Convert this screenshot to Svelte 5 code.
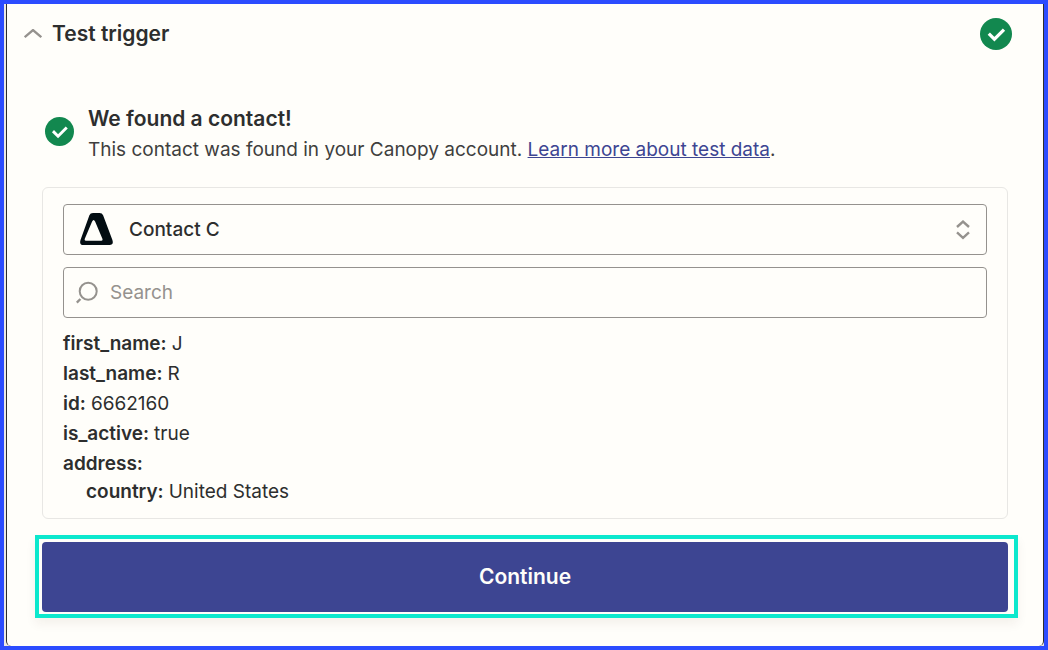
<script>
    const contacts = ['Contact C'];
    let selected = $state(contacts[0]);
    let query = $state('');
    let open = $state(true);

    const fields = [
        { key: 'first_name', value: 'J' },
        { key: 'last_name', value: 'R' },
        { key: 'id', value: '6662160' },
        { key: 'is_active', value: 'true' },
        { key: 'address', value: '' },
        { key: 'country', value: 'United States', nested: true }
    ];

    const toggle = () => {
        open = !open;
    }
</script>

{#snippet check()}
    <svg class="check" viewBox="0 0 32 32" aria-hidden="true">
        <circle cx="16" cy="16" r="16" fill="#12884f" />
        <path d="M8.8 15.6L14.4 21.2L24 11.6" fill="none" stroke="#fff" stroke-width="3.2" />
    </svg>
{/snippet}

<main class="frame">
    <section class="panel">
        <header>
            <button class="toggle" aria-expanded={open} onclick={toggle}>
                <svg width="18" height="10" viewBox="0 0 18 10" aria-hidden="true">
                    <path d="M0.7 8.2L9 1.1L17.3 8.2" fill="none" stroke="#95928e" stroke-width="2.4" />
                </svg>
                <span>Test trigger</span>
            </button>
            <div class="status">{@render check()}</div>
        </header>

        {#if open}
        <div class="message">
            <div class="icon">{@render check()}</div>
            <div>
                <h2>We found a contact!</h2>
                <p>This contact was found in your Canopy account. <a href="#test-data">Learn more about test data</a>.</p>
            </div>
        </div>

        <div class="card">
            <div class="control">
                <svg class="logo" width="33" height="33" viewBox="0 0 33 33" aria-hidden="true">
                    <path fill="#030d12" fill-rule="evenodd" d="M13 0H19.5Q22.2 0 23.1 2.2L32.4 27Q34 32 29.4 32H3.6Q-1 32 0.5 27L9.4 2.2Q10.3 0 13 0ZM12.1 8.4Q13.6 5.4 15.1 8.4L22.3 25.6Q23.1 27.8 21.2 27.8H6Q4.1 27.8 4.9 25.6Z" />
                </svg>
                <select aria-label="Test contact" bind:value={selected}>
                    {#each contacts as contact}
                        <option>{contact}</option>
                    {/each}
                </select>
                <svg class="arrows" width="14" height="20" viewBox="0 0 14 20" aria-hidden="true">
                    <path d="M1 7L7 1.6L13 7M1 12.4L7 17.8L13 12.4" fill="none" stroke="#95928e" stroke-width="2.4" />
                </svg>
            </div>

            <div class="control">
                <svg class="glass" width="23" height="23" viewBox="0 0 23 23" aria-hidden="true">
                    <g fill="none" stroke="#95928e" stroke-width="2">
                        <circle cx="12.2" cy="10.2" r="8.5" />
                        <path d="M0.8 21.6L4.4 18" stroke-width="2.4" />
                    </g>
                </svg>
                <input type="text" aria-label="Search" placeholder="Search" bind:value={query}>
            </div>

            <dl>
                {#each fields as field}
                <div class="row" class:nested={field.nested}>
                    <dt>{field.key}:</dt>
                    <dd>{field.value}</dd>
                </div>
                {/each}
            </dl>
        </div>

        <div class="highlight">
            <button class="continue">Continue</button>
        </div>
        {/if}
    </section>
</main>

<style>
:global(body) {
    background: #fffefa;
}
.frame {
    box-sizing: border-box;
    min-height: 100vh;
    display: flex;
    padding-left: 2px;
    border: 4px solid #2b4cff;
    background: #ebe9e5;
    color: #2d2e2e;
    font-family: Inter, "Liberation Sans", sans-serif;
    font-size: 19px;
    line-height: 30px;
}
.panel {
    flex: 1;
    min-width: 0;
    padding-bottom: 28px;
    border: solid #2d2e2e;
    border-width: 0 1px;
    border-radius: 0 0 5px 5px;
    background: #fffefa;
}
header {
    display: flex;
    align-items: center;
    justify-content: space-between;
    padding: 14px 31px 0 17px;
}
button {
    border: 0;
    font: inherit;
    cursor: pointer;
}
.toggle {
    display: flex;
    align-items: center;
    gap: 10px;
    padding: 0;
    background: none;
    color: inherit;
    font-size: 21px;
    font-weight: 600;
    line-height: 32px;
}
.check {
    display: block;
    width: 100%;
}
.status {
    width: 32px;
}
.message {
    display: flex;
    align-items: flex-start;
    gap: 14px;
    padding: 53px 35px 0 38px;
}
.icon {
    flex: none;
    width: 29px;
    padding-top: 14px;
}
h2 {
    margin: 0;
    font-size: 21px;
    font-weight: 600;
    line-height: 32px;
}
p {
    margin: 0;
    color: #403f3e;
}
a {
    color: #3d4592;
}
.card {
    display: flex;
    flex-direction: column;
    gap: 12px;
    margin: 22px 35px 0;
    padding: 16px 20px 11px;
    border: 1px solid #e8e7e4;
    border-radius: 6px;
}
.control {
    display: grid;
    align-items: center;
    height: 49px;
    border: 1px solid #95928e;
    border-radius: 4px;
}
.control > * {
    grid-area: 1 / 1;
}
.logo, .glass, .arrows {
    pointer-events: none;
}
.logo {
    margin-left: 16px;
}
.glass {
    margin-left: 12px;
}
.arrows {
    justify-self: end;
    margin-right: 16px;
}
select, input {
    appearance: none;
    box-sizing: border-box;
    width: 100%;
    height: 100%;
    border: 0;
    background: none;
    color: inherit;
    font: inherit;
}
select {
    padding: 0 48px 0 65px;
    font-weight: 500;
}
input {
    padding: 0 16px 0 46px;
}
input::placeholder {
    color: #95928e;
    opacity: 1;
}
dl {
    margin: -1px 0 0;
}
.row {
    display: flex;
    gap: 5px;
}
.nested {
    margin-top: -2px;
    padding-left: 23px;
}
dt {
    font-weight: 600;
}
dd {
    margin: 0;
}
.highlight {
    margin: 16px 25px 0 28px;
    padding: 3px 6px 2px 3px;
    border: 4px solid #0ce8cd;
    box-shadow: 0 6px 10px rgba(60, 40, 20, 0.06);
}
.continue {
    display: block;
    width: 100%;
    height: 70px;
    border-radius: 4px;
    background: #3d4592;
    color: #fffefa;
    font-size: 21px;
    font-weight: 600;
}
</style>
